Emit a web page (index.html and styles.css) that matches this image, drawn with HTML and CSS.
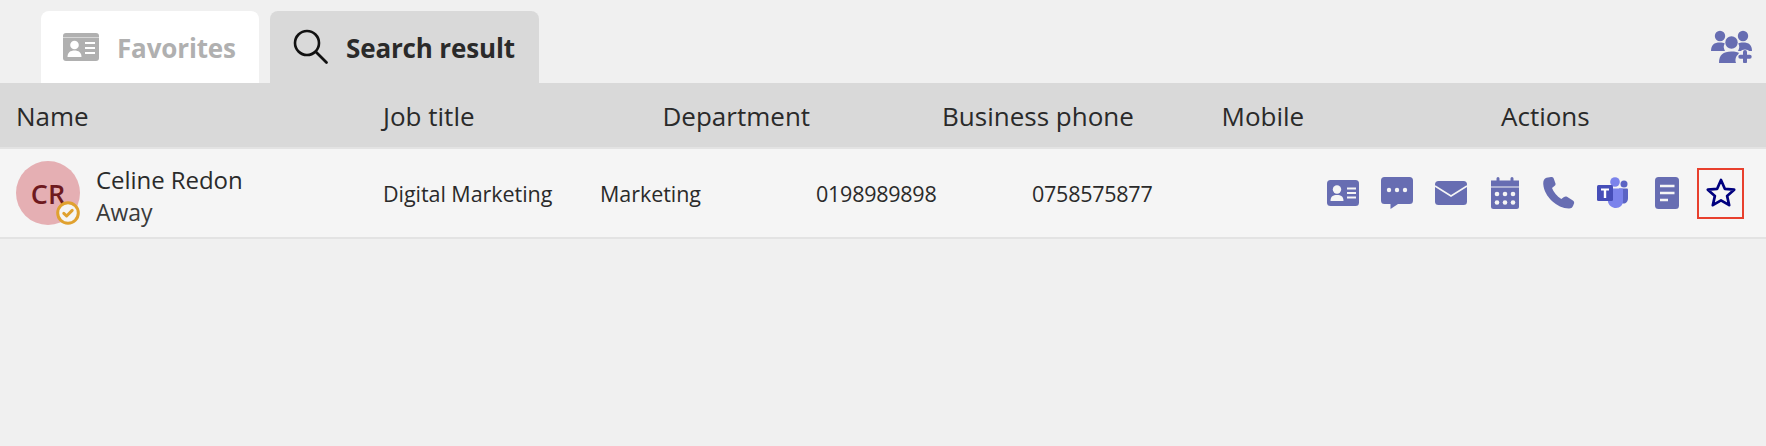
FILE: index.html
```html
<!DOCTYPE html>
<html lang="en">
<head>
<meta charset="utf-8">
<title>Contacts</title>
<link rel="stylesheet" href="styles.css">
</head>
<body>
<nav class="tabbar">
  <div class="tab tab-favorites">
    <svg class="tab-icon" viewBox="0 0 36 28"><path fill="#b0b0b0" d="M3 0h30a3 3 0 0 1 3 3v22a3 3 0 0 1-3 3H3a3 3 0 0 1-3-3V3a3 3 0 0 1 3-3z"/><path fill="none" stroke="#d6d6d6" stroke-width="1" d="M0 4.500h36"/><circle cx="11.500" cy="12" r="4.300" fill="#fff"/><path fill="#fff" d="M4.500 24c0-4.500 3-6.500 7-6.500s7 2 7 6.500z"/><path stroke="#fff" stroke-width="2" d="M22 10h10M22 15h10M22 20h10"/></svg>
    <span>Favorites</span>
  </div>
  <div class="tab tab-search">
    <svg class="tab-icon" viewBox="0 0 36 36"><circle cx="14" cy="14" r="12" fill="none" stroke="#111" stroke-width="2.600"/><path stroke="#111" stroke-width="2.800" stroke-linecap="round" d="M23 23l10.500 10.500"/></svg>
    <span>Search result</span>
  </div>
  <svg class="add-people" viewBox="0 0 41 33"><circle cx="9" cy="6" r="5.200" fill="#676db2"/><circle cx="32" cy="6" r="5.200" fill="#676db2"/><path fill="#676db2" d="M0 21c0-6 3-8.500 9-8.500 2 0 3.500.3 4.800 1-1 1.500-1.300 3.200-.8 5 .2.900.6 1.700 1 2.500zM41 21c0-6-3-8.500-9-8.500-2 0-3.500.3-4.800 1 1 1.500 1.300 3.200.8 5-.2.900-.6 1.700-1 2.500z"/><circle cx="20.500" cy="12.500" r="6.200" fill="#676db2"/><path fill="#676db2" d="M8 33c0-8 4-11.500 12.500-11.500 3.500 0 6.300.6 8.300 2-3.500 1.500-5.300 5.500-3.800 9.500z"/><circle cx="34" cy="26.500" r="7" fill="#f0f0f0"/><path stroke="#676db2" stroke-width="4" stroke-linecap="round" d="M34 22v9.500M29.300 26.700h9.400"/></svg>
</nav>

<div class="table-head">
  <div class="head-name">Name</div>
  <div class="head-col">Job title</div>
  <div class="head-col">Department</div>
  <div class="head-col">Business phone</div>
  <div class="head-col">Mobile</div>
  <div class="head-col">Actions</div>
</div>

<div class="table-row">
  <div class="person">
    <div class="avatar">CR
      <svg class="status" viewBox="0 0 24 24"><circle cx="12" cy="12" r="10.300" fill="#f5f5f5" stroke="#e0a12f" stroke-width="3"/><path fill="none" stroke="#e0a12f" stroke-width="3" stroke-linecap="round" stroke-linejoin="round" d="M7.800 12.300l2.800 2.700 5.600-5.600"/></svg>
    </div>
    <div class="person-text">
      <div class="person-name">Celine Redon</div>
      <div class="person-status">Away</div>
    </div>
  </div>
  <div class="cell cell-job">Digital Marketing</div>
  <div class="cell">Marketing</div>
  <div class="cell cell-number">0198989898</div>
  <div class="cell cell-number">0758575877</div>
  <div class="actions">
    <svg class="action" viewBox="0 0 32 32"><rect y="3" width="32" height="26" rx="3.500" fill="#676db2"/><circle cx="10" cy="12.500" r="4.200" fill="#f5f5f5"/><path fill="#f5f5f5" d="M3.500 24c0-4.500 2.500-6 6.500-6s6.500 1.500 6.500 6z"/><path stroke="#f5f5f5" stroke-width="2" d="M20 11.500h9M20 16h9M20 20.500h9"/></svg>
    <svg class="action" viewBox="0 0 32 32"><path fill="#676db2" d="M3.500 0h25A3.500 3.500 0 0 1 32 3.500v20a3.500 3.500 0 0 1-3.500 3.500H17l-7.500 5v-5h-6A3.500 3.500 0 0 1 0 23.500v-20A3.500 3.500 0 0 1 3.500 0z"/><circle cx="8" cy="13" r="2.200" fill="#f5f5f5"/><circle cx="16" cy="13" r="2.200" fill="#f5f5f5"/><circle cx="24" cy="13" r="2.200" fill="#f5f5f5"/></svg>
    <svg class="action" viewBox="0 0 32 32"><rect y="4" width="32" height="24" rx="3.500" fill="#676db2"/><path fill="none" stroke="#f5f5f5" stroke-width="1.500" d="M0 9l16 10 16-10"/></svg>
    <svg class="action" viewBox="0 0 32 32"><path fill="#676db2" d="M2 3.500h5.500V1.500a1.500 1.500 0 0 1 3 0v2h11v-2a1.500 1.500 0 0 1 3 0v2H30V9.500H2z"/><path fill="#676db2" d="M2 10.500h28v19a2.500 2.500 0 0 1-2.500 2.500h-23A2.500 2.500 0 0 1 2 29.500z"/><g fill="#f5f5f5"><circle cx="8" cy="17" r="2.300"/><circle cx="16" cy="17" r="2.300"/><circle cx="24" cy="17" r="2.300"/><circle cx="8" cy="25.500" r="2.300"/><circle cx="16" cy="25.500" r="2.300"/><circle cx="24" cy="25.500" r="2.300"/></g></svg>
    <svg class="action" viewBox="0 0 32 32"><path fill="#676db2" d="M3.500.8 8 0c1.500-.2 2.300.5 2.800 1.800l1.600 4.500c.4 1.200.1 2-1 2.800L9 11c1.500 4 5 8.500 9.300 11l2.700-2c1-.7 2-.8 3-.2l5.500 3.500c1.300.8 2 1.800 1.500 3.200l-1 2.500c-.7 1.700-2 2.500-4 2.500C14 31.500 1.300 19.500.3 7.500 0 4 1 1.500 3.500.8z"/></svg>
    <svg class="action" viewBox="0 0 32 32"><circle cx="18" cy="5" r="4.800" fill="#7b83eb"/><circle cx="27" cy="7" r="3.500" fill="#5b64c4"/><path fill="#5b64c4" d="M22 11.500h8a1 1 0 0 1 1 1V21c0 3.500-1.800 5.500-4.700 5.500-2.500 0-4.300-1.500-5.300-3.500z"/><path fill="#7b83eb" d="M10 11.500h15a1 1 0 0 1 1 1V24c0 4-3 7-7 7s-7-2.500-8-6z"/><rect y="8" width="16" height="16" rx="1.500" fill="#464eb8"/><path fill="#fff" d="M4 11.500h8v2H9.200V21H6.800v-7.500H4z"/></svg>
    <svg class="action" viewBox="0 0 32 32"><rect x="4" width="24" height="32" rx="3.500" fill="#676db2"/><path stroke="#f5f5f5" stroke-width="2.300" d="M9 9h14.500M9 16h14.500M9 23h8"/></svg>
    <div class="favorite-marked">
      <svg class="action" viewBox="0 0 32 32"><path fill="none" stroke="#00007f" stroke-width="2.700" stroke-linejoin="round" d="M16 3l3.800 8.800 9.400.9-7.100 6.200 2.100 9.300L16 23.300l-8.200 4.900 2.100-9.300-7.100-6.200 9.400-.9z"/></svg>
    </div>
  </div>
</div>
</body>
</html>
```

FILE: styles.css
```css
* { box-sizing: border-box; }

html, body { height: 100%; }

body {
  margin: 0;
  background: #f0f0f0;
  color: #2a2a2a;
  font-family: "Open Sans", "Noto Sans", sans-serif;
  overflow: hidden;
}

.tabbar {
  display: flex;
  align-items: flex-end;
  gap: 11px;
  height: 83px;
  padding: 0 14px 0 41px;
}

.tab {
  display: flex;
  align-items: center;
  height: 72px;
  padding-bottom: 0;
  border-radius: 8px 8px 0 0;
  font-size: 26px;
  font-weight: 700;
  letter-spacing: -0.15px;
}

.tab span { padding-top: 2px; }

.tab-favorites {
  width: 218px;
  gap: 18px;
  padding-left: 22px;
  background: #fff;
  color: #b0b0b0;
}

.tab-favorites .tab-icon { width: 36px; height: 28px; }

.tab-search {
  width: 269px;
  gap: 17px;
  padding-left: 23px;
  background: #d9d9d9;
}

.tab-search .tab-icon { width: 36px; height: 36px; }

.add-people {
  width: 41px;
  height: 33px;
  margin: 0 0 20px auto;
}

.table-head {
  display: flex;
  align-items: center;
  height: 66px;
  padding: 2px 0 0 16px;
  background: #d9d9d9;
  border-bottom: 2px solid #e3e3e3;
  font-size: 26px;
}

.head-name { width: 367px; }

.head-col { width: 279.500px; }

.head-col:last-child { width: auto; }

.table-row {
  display: flex;
  align-items: center;
  height: 90px;
  padding-left: 16px;
  background: #f5f5f5;
  border-bottom: 2px solid #e3e3e3;
  font-size: 21.500px;
  letter-spacing: -0.05px;
}

.person {
  display: flex;
  align-items: center;
  gap: 16px;
  width: 367px;
}

.avatar {
  position: relative;
  display: flex;
  align-items: center;
  justify-content: center;
  width: 64px;
  height: 64px;
  border-radius: 50%;
  background: #e5afb3;
  color: #6e1a1f;
  font-size: 27px;
  font-weight: 600;
}

.status {
  position: absolute;
  right: 0;
  bottom: 0;
  width: 24px;
  height: 24px;
}

.person-text {
  padding-top: 6px;
  line-height: 32px;
}

.person-name { font-size: 24px; }

.person-status { font-size: 23px; color: #3a3a3a; }

.cell { width: 216px; padding-top: 1px; }

.cell-job { width: 217px; }

.cell-number { letter-spacing: -0.25px; }

.actions {
  display: flex;
  gap: 22px;
  align-items: center;
  margin-left: auto;
  padding-right: 29px;
}

.action {
  display: block;
  width: 32px;
  height: 32px;
}

.favorite-marked { position: relative; }

.favorite-marked::after {
  content: "";
  position: absolute;
  inset: -9px -7px -10px -8px;
  border: 2px solid #e8402d;
}
```
